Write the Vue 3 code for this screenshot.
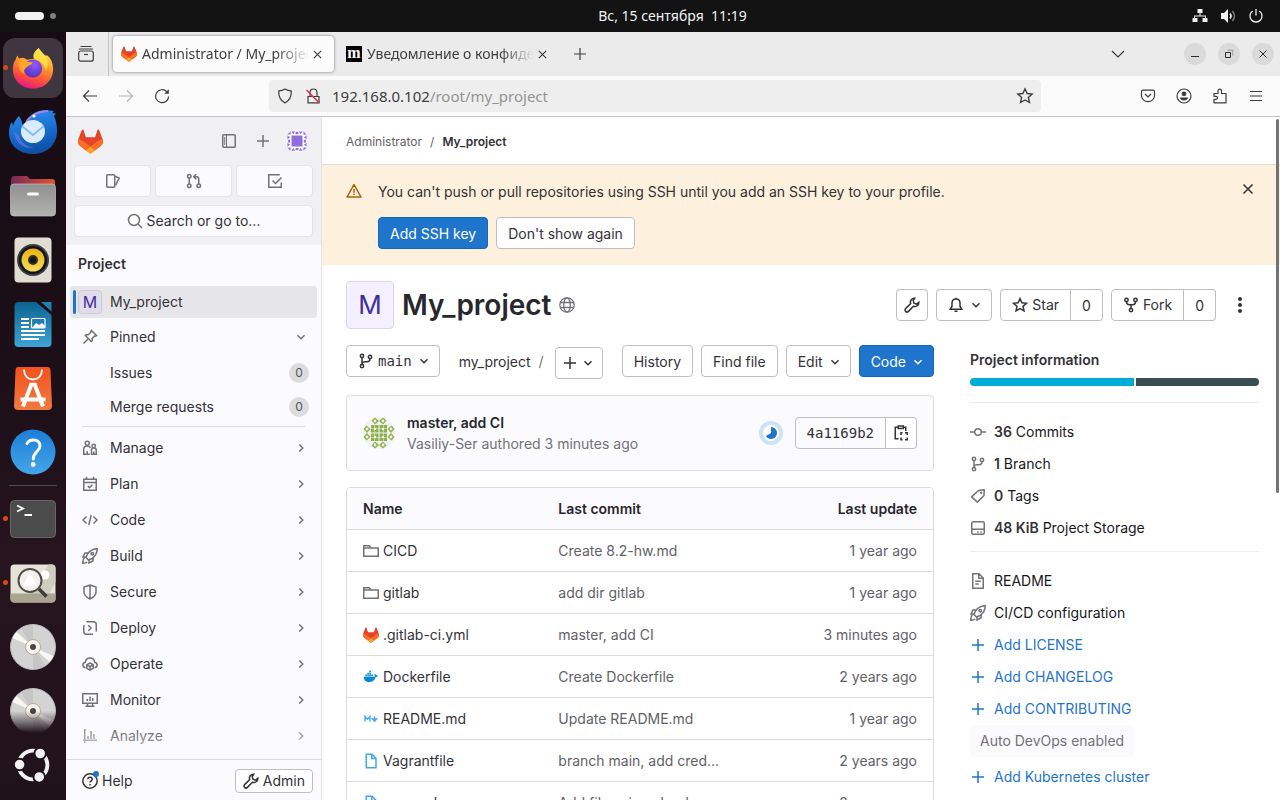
<script setup>
const navItems = [
  { label: 'Manage', icon: 'users' },
  { label: 'Plan', icon: 'calendar' },
  { label: 'Code', icon: 'code' },
  { label: 'Build', icon: 'rocket' },
  { label: 'Secure', icon: 'shield' },
  { label: 'Deploy', icon: 'deploy' },
  { label: 'Operate', icon: 'cloud' },
  { label: 'Monitor', icon: 'monitor' },
  { label: 'Analyze', icon: 'chart' },
]

const pinned = [
  { label: 'Issues', count: 0 },
  { label: 'Merge requests', count: 0 },
]

const files = [
  { name: 'CICD', icon: 'folder', tone: 'grey', commit: 'Create 8.2-hw.md', updated: '1 year ago' },
  { name: 'gitlab', icon: 'folder', tone: 'grey', commit: 'add dir gitlab', updated: '1 year ago' },
  { name: '.gitlab-ci.yml', icon: 'tanuki', tone: 'brand', commit: 'master, add CI', updated: '3 minutes ago' },
  { name: 'Dockerfile', icon: 'docker', tone: 'docker', commit: 'Create Dockerfile', updated: '2 years ago' },
  { name: 'README.md', icon: 'markdown', tone: 'sky', commit: 'Update README.md', updated: '1 year ago' },
  { name: 'Vagrantfile', icon: 'file', tone: 'sky', commit: 'branch main, add cred...', updated: '2 years ago' },
  { name: 'nexus.sh', icon: 'file', tone: 'sky', commit: 'Add files via upload', updated: '2 years ago' },
]

const stats = [
  { icon: 'commit', value: '36', label: 'Commits' },
  { icon: 'branch', value: '1', label: 'Branch' },
  { icon: 'tag', value: '0', label: 'Tags' },
  { icon: 'disk', value: '48 KiB', label: 'Project Storage' },
]

const languages = [
  { name: 'Go', share: 57, color: '#00add8' },
  { name: 'Dockerfile', share: 43, color: '#384d54' },
]

const dockApps = [
  { id: 'firefox', title: 'Firefox', active: true, running: true },
  { id: 'thunderbird', title: 'Thunderbird' },
  { id: 'files', title: 'Files' },
  { id: 'rhythmbox', title: 'Rhythmbox' },
  { id: 'writer', title: 'LibreOffice Writer' },
  { id: 'appcenter', title: 'App Center' },
  { id: 'help', title: 'Help' },
]
const dockOpen = [
  { id: 'terminal', title: 'Terminal', running: true },
  { id: 'viewer', title: 'Image Viewer', running: true },
  { id: 'disc', title: 'Disc 1' },
  { id: 'disc', title: 'Disc 2', faded: true },
]
</script>

<template>
  <svg class="defs" aria-hidden="true">
    <defs>
      <linearGradient id="gFox" x1=".7" y1="0" x2=".35" y2="1">
        <stop offset="0" stop-color="#fff44f" /><stop offset=".4" stop-color="#ff9a2a" /><stop offset=".75" stop-color="#ff4a3f" /><stop offset="1" stop-color="#e31587" />
      </linearGradient>
      <radialGradient id="gGlobe" cx=".6" cy=".3" r=".8">
        <stop offset="0" stop-color="#9059ff" /><stop offset="1" stop-color="#4c2fb5" />
      </radialGradient>
      <linearGradient id="gBird" x1=".4" y1="0" x2=".6" y2="1">
        <stop offset="0" stop-color="#2a8cf0" /><stop offset=".6" stop-color="#1565c8" /><stop offset="1" stop-color="#0f4d9c" />
      </linearGradient>
      <linearGradient id="gFolder" x1="0" y1="0" x2="1" y2="0">
        <stop offset="0" stop-color="#77295a" /><stop offset="1" stop-color="#e3532a" />
      </linearGradient>
      <linearGradient id="gFront" x1="0" y1="0" x2="0" y2="1">
        <stop offset="0" stop-color="#8f8f8f" /><stop offset="1" stop-color="#b2b4b1" />
      </linearGradient>
      <linearGradient id="gYellow" x1="0" y1="0" x2="0" y2="1">
        <stop offset="0" stop-color="#e8b110" /><stop offset="1" stop-color="#f7dc5a" />
      </linearGradient>
      <linearGradient id="gWriter" x1="0" y1="0" x2="0" y2="1">
        <stop offset="0" stop-color="#0b638f" /><stop offset="1" stop-color="#3fa4d6" />
      </linearGradient>
      <linearGradient id="gBag" x1="0" y1="0" x2="0" y2="1">
        <stop offset="0" stop-color="#f4511e" /><stop offset="1" stop-color="#f07a42" />
      </linearGradient>
      <linearGradient id="gHelp" x1="0" y1="0" x2="0" y2="1">
        <stop offset="0" stop-color="#1c7ed8" /><stop offset="1" stop-color="#44a6e8" />
      </linearGradient>

      <symbol id="i-tanuki" viewBox="0 0 25 24">
        <path fill="#e24329" d="m24.507 9.5-.034-.09L21.082.562a.896.896 0 0 0-1.694.091l-2.29 7.01H7.825L5.535.653a.898.898 0 0 0-1.694-.09L.451 9.411.416 9.5a6.297 6.297 0 0 0 2.09 7.278l.012.01.03.022 5.16 3.867 2.56 1.935 1.554 1.176a1.051 1.051 0 0 0 1.268 0l1.555-1.176 2.56-1.935 5.197-3.89.014-.01A6.297 6.297 0 0 0 24.507 9.5Z" />
        <path fill="#fc6d26" d="m24.507 9.5-.034-.09a11.44 11.44 0 0 0-4.56 2.051l-7.447 5.632 4.742 3.584 5.197-3.89.014-.01A6.297 6.297 0 0 0 24.507 9.5Z" />
        <path fill="#fca326" d="m7.707 20.677 2.56 1.935 1.555 1.176a1.051 1.051 0 0 0 1.268 0l1.555-1.176 2.56-1.935-4.743-3.584-4.755 3.584Z" />
        <path fill="#fc6d26" d="M5.01 11.461a11.43 11.43 0 0 0-4.56-2.05L.416 9.5a6.297 6.297 0 0 0 2.09 7.278l.012.01.03.022 5.16 3.867 4.745-3.584-7.444-5.632Z" />
      </symbol>
      <symbol id="i-chev-r" viewBox="0 0 16 16"><path d="m6.250 4.500 3.500 3.500-3.500 3.500" /></symbol>
      <symbol id="i-chev-d" viewBox="0 0 16 16"><path d="m4.500 6.250 3.500 3.500 3.500-3.500" /></symbol>
      <symbol id="i-plus" viewBox="0 0 16 16"><path d="M8 2v12M2 8h12" /></symbol>
      <symbol id="i-close" viewBox="0 0 16 16"><path d="m3.500 3.500 9 9m0-9-9 9" /></symbol>
      <symbol id="i-panel" viewBox="0 0 16 16"><rect x="1.750" y="1.750" width="12.500" height="12.500" rx="1" /><path d="M5.500 2v12M3.750 4v8" stroke-width="1" /></symbol>
      <symbol id="i-issues" viewBox="0 0 16 16"><rect x="1.750" y="1.750" width="8" height="12.500" rx="1" /><path d="m10 3.250 4.200 1.900-3.700 7.300" /></symbol>
      <symbol id="i-mr" viewBox="0 0 16 16"><circle cx="3.250" cy="3.250" r="1.750" /><circle cx="3.250" cy="12.750" r="1.750" /><circle cx="12.750" cy="12.750" r="1.750" /><path d="M3.250 5v6M12.750 11V6c0-1.500-.8-2.250-2-2.250H8M10.250 1.250l-2.500 2.500 2.500 2.500" /></symbol>
      <symbol id="i-todo" viewBox="0 0 16 16"><path d="M14.250 9.500v4.750H1.750V1.750h11M5.500 7.500 8.500 10.500l6-6" /></symbol>
      <symbol id="i-search" viewBox="0 0 16 16"><circle cx="7" cy="7" r="5.500" /><path d="m11 11 4 4" /></symbol>
      <symbol id="i-pin" viewBox="0 0 16 16"><path d="m9.500 1.500 5 5-1.300.6-.6-.1-2.500 2.500.2 2-1 1-6-6 1-1 2 .2L8.800 3.200l-.1-.6zM6 10l-4.500 4.500" /></symbol>
      <symbol id="i-users" viewBox="0 0 16 16"><circle cx="5.250" cy="3.250" r="2" /><circle cx="11.750" cy="6" r="1.700" /><path d="M7.750 14.250h-6V9c0-2 1.500-3 3.500-3s2.800.9 3 2M9.500 14.250V10c0-1.200.9-1.900 2.250-1.900S14.250 9 14.250 10.200v4.050zM5.250 11v3.200M11.800 11.500v2.700" /></symbol>
      <symbol id="i-calendar" viewBox="0 0 16 16"><path d="M1.750 3.250h12.500v11H1.750zM1.750 6.500h12.500M4.500.750V3.500M11.500.750V3.500M5.750 10l1.700 1.700 3-3" /></symbol>
      <symbol id="i-code" viewBox="0 0 16 16"><path d="M4.500 4.500 1 8l3.500 3.500M11.500 4.500 15 8l-3.500 3.500M9.250 3l-2.500 10" /></symbol>
      <symbol id="i-rocket" viewBox="0 0 16 16"><path d="M15.200.8C10.500.8 7.800 2.800 5.500 6L4 9.500 6.500 12l3.500-1.500c3.200-2.300 5.200-5 5.200-9.700zM6.500 4.750 3 5 1 9l3-.2M11.250 9.500 11 13l-4 2 .2-3M2.500 10c-1.500 1-1.700 3-1.700 5.200 1.700 0 3.200 0 4.500-1.200" /><circle cx="10.250" cy="5.750" r="1.250" /></symbol>
      <symbol id="i-shield" viewBox="0 0 16 16"><path d="M8 1 14 3v5c0 3.300-2.500 5.300-6 7-3.500-1.700-6-3.700-6-7V3zM8 1v14" /></symbol>
      <symbol id="i-deploy" viewBox="0 0 16 16"><path d="M4.500 1.750h7c1.700 0 2.750 1 2.750 2.750v7M1.750 5v6.500c0 1.700 1 2.750 2.750 2.750H11M6.250 5.250 9 8l-2.750 2.750" /></symbol>
      <symbol id="i-cloud" viewBox="0 0 16 16"><path d="M3.500 11.700C1.800 11.500.9 10.400.9 9c0-1.500 1-2.600 2.500-2.800C3.600 3.700 5.400 1.900 8 1.900s4.400 1.800 4.600 4.300c1.500.2 2.500 1.300 2.500 2.800 0 1.400-.9 2.500-2.600 2.700" /><path d="m8 7 3.200 1.700v3.700L8 14.200l-3.200-1.800V8.700zM4.900 8.800 8 10.500l3.100-1.700M8 10.500v3.600" /></symbol>
      <symbol id="i-monitor" viewBox="0 0 16 16"><path d="M.75 1.750h14.500v9.500H.75zM5.500 11.500v2.750M10.500 11.500v2.750M3.500 14.250h9M5.250 7v2M8 4.500V9M10.750 6v3" /></symbol>
      <symbol id="i-chart" viewBox="0 0 16 16"><path d="M2.750 1v14M1 12.250h14M6 8v3M9 3v8M12 6v5" /></symbol>
      <symbol id="i-question" viewBox="0 0 16 16"><circle cx="8" cy="8" r="7.200" /><path d="M5.800 6.300C5.900 5 6.800 4.300 8 4.300s2.200.8 2.200 1.900c0 1.500-2.200 1.700-2.200 3.200M8 11v1.500" /></symbol>
      <symbol id="i-wrench" viewBox="0 0 16 16"><path d="M10.700 1.200A4 4 0 0 0 6.700 6.600L1.600 11.600a1.950 1.950 0 0 0 2.800 2.800L9.400 9.300a4 4 0 0 0 5.400-4L12.700 7.100 9.900 6.100 9.200 3.500z" /></symbol>
      <symbol id="i-warning" viewBox="0 0 16 16"><path d="M8 1.700 15 14H1zM8 6v3.700M8 10.500V12" stroke-linejoin="round" /></symbol>
      <symbol id="i-globe" viewBox="0 0 16 16"><circle cx="8" cy="8" r="7.200" /><ellipse cx="8" cy="8" rx="3.300" ry="7.200" /><path d="M1.500 5.500h13M1.500 10.500h13" /></symbol>
      <symbol id="i-bell" viewBox="0 0 16 16"><path d="M8 1.900c-2.500 0-4 1.800-4 4.100v3.500L2.300 12.200h11.400L12 9.500V6c0-2.300-1.500-4.100-4-4.100zM6.500 14.250h3M8 .7v1.200" /></symbol>
      <symbol id="i-star" viewBox="0 0 16 16"><path d="m8 1.600 1.900 4.200 4.500.5-3.400 3 1 4.500L8 11.500l-4 2.300 1-4.500-3.400-3 4.500-.5z" /></symbol>
      <symbol id="i-fork" viewBox="0 0 16 16"><circle cx="3.500" cy="2.900" r="1.700" /><circle cx="12.500" cy="2.900" r="1.700" /><circle cx="8" cy="13.100" r="1.700" /><path d="M3.500 4.700C3.500 7 5 7.700 6.500 7.700h3c1.500 0 3-.7 3-3M8 7.700v3.500" /></symbol>
      <symbol id="i-branch" viewBox="0 0 16 16"><circle cx="4" cy="2.900" r="1.700" /><circle cx="4" cy="13.100" r="1.700" /><circle cx="12" cy="3.900" r="1.700" /><path d="M4 4.700v6.500M12 5.700c0 2.300-1.500 3-3 3H7c-1.700 0-2.700.8-3 2" /></symbol>
      <symbol id="i-dots" viewBox="0 0 16 16"><g fill="currentColor" stroke="none"><circle cx="8" cy="2" r="2" /><circle cx="8" cy="8" r="2" /><circle cx="8" cy="14" r="2" /></g></symbol>
      <symbol id="i-copy" viewBox="0 0 16 16"><path d="M5 2.250H2.250v11.500H5.500M10.500 2.250h2.250V6M5.250 1h5v2.500h-5zM8 10V7.750h1.500M12 7.750h2.250V10M14.250 12.500v2.250H12M9.500 14.750H8V12.500" /></symbol>
      <symbol id="i-folder" viewBox="0 0 16 16"><path d="M.75 13.250V2.750h5.500L8 5h7.250v8.250zM.75 5H8" /></symbol>
      <symbol id="i-file" viewBox="0 0 16 16"><path d="M3.250 1.250H9L13 5.200v9.550H3.250zM8.750 1.500v4H13" /></symbol>
      <symbol id="i-doc" viewBox="0 0 16 16"><path d="M2.750.750H9L13.250 5v10.250H2.750zM8.750 1v4.250H13M5.250 8.250h5.500M5.250 11h3.500" /></symbol>
      <symbol id="i-commit" viewBox="0 0 16 16"><circle cx="8" cy="8" r="3.250" /><path d="M0 8h4.750M11.250 8H16" /></symbol>
      <symbol id="i-tag" viewBox="0 0 16 16"><path d="M8.500 2.500 14.200 1.800 14 7.500l-6.600 6.600-5.800-5.200z" stroke-linejoin="round" /><circle cx="11.200" cy="4.800" r=".5" /></symbol>
      <symbol id="i-disk" viewBox="0 0 16 16"><rect x="1.750" y="1.750" width="12.500" height="12.500" rx="1.500" /><path d="M2 9.250h12M7 12h1.500M10.250 12h1.500" /></symbol>
      <symbol id="i-markdown" viewBox="0 0 16 16"><path d="M2 10.500v-5l2.500 2.800L7 5.500v5M11.500 5.500v3M9.500 8l2 2.200 2-2.200z" stroke-width="1.400" /></symbol>
      <symbol id="i-docker" viewBox="0 0 16 16"><path fill="currentColor" stroke="none" d="M1 7.700h10.700c.2-1 .1-1.700-.4-2.400l.6-.6c.7.5 1 1 1.100 1.700.7-.1 1.400 0 1.900.4-.4.9-1.200 1.300-2.300 1.300C11.600 11.700 9.300 13 6.300 13 2.500 13 .8 11.200 1 7.700zM2.300 5.600h1.600v1.600H2.300zM4.300 5.600h1.600v1.600H4.300zM6.300 5.600h1.600v1.600H6.300zM8.300 5.600h1.600v1.600H8.300zM4.300 3.700h1.600v1.500H4.300zM6.300 3.700h1.600v1.500H6.300zM6.300 1.800h1.600v1.500H6.300z" /></symbol>

      <symbol id="d-firefox" viewBox="0 0 48 48">
        <path fill="url(#gFox)" d="M30 3c1 3 4.500 5 6.500 8 1-.2 2-.1 3 .3C43 15 45 19 45 25c0 12-9.500 20.500-21 20.500S3 37 3 25c0-4 1-7.500 3-10 .3-1.500 1-3 2-4 .2 1.200.7 2 1.500 3 3-1.300 5.500-1 8.500 1.500l7.500-1.500C23 11 26 6 30 3z" />
        <circle cx="24" cy="24.500" r="9.500" fill="url(#gGlobe)" />
        <path fill="#ffa52b" d="M9 15c4-1.500 7 0 9 2.500l6 .5c-1 2.500-4 3-5.500 4.500-2.500 1.500-5 4.500-3.500 7.500-4-2-6-5-6-9z" />
        <path fill="#ffe14a" d="M30 3c1 3 4.500 5 6.500 8 3 4.500 4 10 1 16-1-4-3-8-7-10.500-3-1.500-5-2-5-2.500C23 11 26 6 30 3z" opacity=".85" />
      </symbol>
      <symbol id="d-thunderbird" viewBox="0 0 48 48">
        <path fill="url(#gBird)" d="M21 9c4-6 12-8 24-6l-2 2 4 .5-2 2.500c2 4 3 10 3 15 0 13-9.500 23-24 23C10 46 0 37 0 25c0-5 1-9 3-11l1 4c1-4 3-7 6-10 2 3 4 7 4 12z" />
        <path fill="none" stroke="#9d86ea" stroke-width="2" d="M17 15c3-7 10-11 22-12" />
        <circle cx="25" cy="8" r="1.600" fill="#fff" />
        <ellipse cx="24" cy="23.500" rx="12" ry="11.500" fill="#d9ecff" />
        <path d="m13 18 11 9 11-9" fill="none" stroke="#86bdf0" stroke-width="2" />
        <path d="M5 24c1 10 9 17 20 16-10-2-14-7-15-13z" fill="#6f7fe0" opacity=".6" />
      </symbol>
      <symbol id="d-files" viewBox="0 0 48 48">
        <path fill="url(#gFolder)" d="M2 14V8c0-2 1-4 4-4h12l3 3h22c2 0 3 1 3 3v6H2z" />
        <rect x="1.500" y="12" width="45" height="32" rx="3.500" fill="url(#gFront)" stroke="#c4c4c0" stroke-width=".7" />
        <rect x="18" y="20.500" width="12" height="3" rx="1.500" fill="#fff" />
      </symbol>
      <symbol id="d-rhythmbox" viewBox="0 0 48 48">
        <rect x="5.500" y="1.500" width="37" height="45" rx="4" fill="#e2ddd2" />
        <circle cx="24" cy="24" r="16" fill="#3c3d44" /><circle cx="24" cy="24" r="14" fill="#15161b" />
        <circle cx="24" cy="24" r="11.500" fill="url(#gYellow)" /><circle cx="24" cy="24" r="5" fill="#33302c" /><circle cx="24" cy="24" r="3" fill="#151515" />
      </symbol>
      <symbol id="d-writer" viewBox="0 0 48 48">
        <path fill="url(#gWriter)" d="M9 2h18l15.500 13v28a4 4 0 0 1-4 4H9.500a4 4 0 0 1-4-4V6c0-2 1.500-4 3.500-4z" />
        <path fill="#1f80b0" d="M32 2h10.500v9.500z" />
        <path d="M12 19h8M12 23h8M12 27h8M12 31h24M12 35h24M12 39h18" stroke="#fff" stroke-width="2" />
        <rect x="22.500" y="18.500" width="13.500" height="9.500" rx="1" fill="none" stroke="#fff" stroke-width="1.200" />
        <path fill="#fff" d="m23 28 4-5 3 2 3-2 3 3v2z" />
      </symbol>
      <symbol id="d-appcenter" viewBox="0 0 48 48">
        <path fill="url(#gBag)" d="M9.500 3h29c2 0 3 1 3 3L43 42c0 2.500-1.500 4-4 4H9c-2.500 0-4-1.500-4-4L6.500 6c0-2 1-3 3-3z" />
        <path d="M15 5.500c0 6 3.500 10 9 10s9-4 9-10" fill="none" stroke="#fff" stroke-width="1.800" />
        <path d="M22.500 20 14 42.500M25.500 20 34 42.500M11.500 35.500h25" stroke="#fff" stroke-width="4" fill="none" />
        <path d="M20.500 20h7" stroke="#fff" stroke-width="2.500" />
      </symbol>
      <symbol id="d-help" viewBox="0 0 48 48">
        <circle cx="24" cy="24" r="22.500" fill="url(#gHelp)" />
        <path d="M18 15.500C19.500 12.500 22 12 24.500 12c4 0 6.500 2.500 6.500 6 0 5-6.700 6-6.700 13" fill="none" stroke="#fff" stroke-width="3" stroke-linecap="round" />
        <circle cx="24.200" cy="36.500" r="2.400" fill="#fff" />
      </symbol>
      <symbol id="d-terminal" viewBox="0 0 48 48">
        <rect x="1.500" y="5.500" width="45" height="37" rx="4" fill="#4b4b4b" stroke="#666" stroke-width="1" />
        <path d="m8 10.500 6 3-6 3M15.500 20h7.500" fill="none" stroke="#fff" stroke-width="1.800" />
      </symbol>
      <symbol id="d-viewer" viewBox="0 0 48 48">
        <rect x="1.500" y="5.500" width="45" height="38" rx="4" fill="#e6e4d8" />
        <path fill="#cfcdbd" d="M40 5.500 20 35h20l6.500-12V9c0-2-1.500-3.500-3.500-3.500z" />
        <path fill="#aaa491" d="M1.500 34.500h45V40c0 2-1.500 3.500-3.500 3.500H5c-2 0-3.500-1.500-3.500-3.500z" />
        <circle cx="36" cy="16" r="4.500" fill="#fff" />
        <circle cx="21" cy="21.500" r="11.500" fill="#f1f0ea" stroke="#4d4d4d" stroke-width="2" />
        <path fill="#fff" d="m14 27 7-14 7 14z" />
        <path d="m30 30 7.500 7.500" stroke="#3b3b3b" stroke-width="3.500" />
      </symbol>
      <symbol id="d-disc" viewBox="0 0 48 48">
        <circle cx="24" cy="24" r="22.500" fill="#d3d3d3" stroke="#bdbdbd" />
        <path d="M24 24V2a22 22 0 0 0-12 4zM24 24v22a22 22 0 0 0 12-4z" fill="#c6c6c6" />
        <path d="M24 24 3.500 15a22 22 0 0 1 4-6zM24 24l20.500 9a22 22 0 0 1-4 6z" fill="#f8f7f3" />
        <circle cx="24" cy="24" r="7.500" fill="#f5f3ee" stroke="#b5ac93" /><circle cx="24" cy="24" r="3" fill="#484848" />
      </symbol>
      <symbol id="d-ubuntu" viewBox="0 0 48 48">
        <circle cx="24" cy="24" r="15" fill="none" stroke="#f2f2f2" stroke-width="4" />
        <g fill="#f2f2f2" stroke="#20121b" stroke-width="2"><circle cx="10" cy="23.500" r="6" /><circle cx="31.500" cy="12" r="6" /><circle cx="30.500" cy="36.500" r="6" /></g>
      </symbol>
    </defs>
  </svg>

  <div class="desktop">
    <header class="topbar">
      <button class="activities" aria-label="Activities"><span class="pill"></span><span class="dot"></span></button>
      <button class="clock">Вс, 15 сентября&nbsp; 11:19</button>
      <button class="tray" aria-label="System menu">
        <svg width="16" height="16" viewBox="0 0 16 16"><path fill="#f2f2f2" d="M5.500 1h5v4h-2v2.500H14V10h1.500v4h-5v-4H13V8.500H3V10h2.500v4h-5v-4H2V7.500h5.500V5h-2z" /></svg>
        <svg width="16" height="16" viewBox="0 0 16 16"><path fill="#f2f2f2" d="M1 5h3l4-4v14l-4-4H1z" /><path d="M10 5.500c1.300 1.500 1.300 3.500 0 5" fill="none" stroke="#f2f2f2" stroke-width="1.500" /><path d="M12.500 3c2.300 3 2.300 7 0 10" fill="none" stroke="#777" stroke-width="1.500" /></svg>
        <svg width="16" height="16" viewBox="0 0 16 16"><path d="M8 1v6.500M4.700 3a6 6 0 1 0 6.600 0" fill="none" stroke="#f2f2f2" stroke-width="1.300" /></svg>
      </button>
    </header>

    <div class="workspace">
      <nav class="dock" aria-label="Dock">
        <div class="apps">
          <button v-for="a in dockApps" :key="a.title" class="app" :class="{ active: a.active, running: a.running }" :aria-label="a.title">
            <svg><use :href="'#d-' + a.id" /></svg>
          </button>
          <div class="dock-sep"></div>
          <button v-for="a in dockOpen" :key="a.title" class="app" :class="{ running: a.running, faded: a.faded }" :aria-label="a.title">
            <svg><use :href="'#d-' + a.id" /></svg>
          </button>
        </div>
        <button class="show-apps" aria-label="Show apps"><svg><use href="#d-ubuntu" /></svg></button>
      </nav>

      <section class="browser">
        <div class="tabs">
          <button class="recent" aria-label="Recent browsing">
            <svg width="18" height="18" viewBox="0 0 18 18" class="line"><path d="M3.500 1.500h11M2 4h14" /><rect x="1.700" y="6" width="14.600" height="10.200" rx="2" /><path d="M7 9.500h4" /></svg>
          </button>
          <div class="tab current">
            <svg class="fav"><use href="#i-tanuki" /></svg>
            <a href="#" class="tab-title">Administrator / My_project</a>
            <button class="tab-close" aria-label="Close tab"><svg><use href="#i-close" /></svg></button>
          </div>
          <div class="tab">
            <span class="fav m">m</span>
            <a href="#" class="tab-title">Уведомление о конфиденциальности</a>
            <button class="tab-close" aria-label="Close tab"><svg><use href="#i-close" /></svg></button>
          </div>
          <button class="new-tab" aria-label="New tab"><svg class="line" width="16" height="16"><use href="#i-plus" /></svg></button>
          <button class="list-tabs" aria-label="List tabs"><svg class="line" width="16" height="16" viewBox="0 0 16 16"><path d="m2 5 6 6 6-6" /></svg></button>
          <div class="win">
            <button aria-label="Minimize"><svg width="10" height="10" viewBox="0 0 10 10"><path d="M1 7.500h8" /></svg></button>
            <button aria-label="Restore"><svg width="10" height="10" viewBox="0 0 10 10"><path d="M1.500 3.500h5v5h-5z" /><path d="M3.500 1.200h5.300v5.300" stroke="#999" /></svg></button>
            <button aria-label="Close window"><svg width="10" height="10" viewBox="0 0 10 10"><path d="m1.500 1.500 7 7m0-7-7 7" /></svg></button>
          </div>
        </div>

        <div class="toolbar">
          <div class="history">
            <button aria-label="Back"><svg class="line" width="16" height="16" viewBox="0 0 16 16"><path d="M15 8H1.500M7 2.500 1.500 8 7 13.500" /></svg></button>
            <button aria-label="Forward" disabled><svg class="line" width="16" height="16" viewBox="0 0 16 16"><path d="M1 8h13.500M9 2.500 14.500 8 9 13.500" /></svg></button>
            <button aria-label="Reload"><svg class="line" width="16" height="16" viewBox="0 0 16 16"><path d="M14.600 8.500a6.500 6.500 0 1 1-2-5" /><path d="M14.800 1.200v4.600h-4.600z" fill="currentColor" stroke="none" /></svg></button>
          </div>
          <div class="urlbar">
            <svg class="line" width="16" height="16" viewBox="0 0 16 16"><path d="M8 1c2 1.300 4.300 1.800 6.300 1.800.2 6-2 10-6.300 12.200C3.700 12.800 1.500 8.800 1.700 2.800 3.700 2.800 6 2.300 8 1z" stroke-linejoin="round" /></svg>
            <svg class="line" width="16" height="16" viewBox="0 0 16 16"><path d="M3 8.500h11v6.300H3zM5 8.500V4.700C5 2.500 6.200 1 8.500 1S12 2.500 12 4.700v3.800" /><path d="M1.500 2 14.500 15" stroke="#e22850" stroke-width="1.500" /></svg>
            <div class="address"><label for="url">192.168.0.102</label><input id="url" value="/root/my_project" /></div>
            <button aria-label="Bookmark"><svg class="line" width="18" height="18"><use href="#i-star" /></svg></button>
          </div>
          <div class="tools">
            <button aria-label="Pocket"><svg class="line" width="16" height="16" viewBox="0 0 16 16"><path d="M1.500 3.500c0-.8.500-1.300 1.300-1.300h10.400c.8 0 1.300.5 1.300 1.300V7.500a6.500 6.200 0 0 1-13 0zM5 6l3 3 3-3" /></svg></button>
            <button aria-label="Account"><svg class="line" width="16" height="16" viewBox="0 0 16 16"><circle cx="8" cy="8" r="7" /><circle cx="8" cy="5.800" r="2.400" fill="currentColor" stroke="none" /><path d="M3.800 9.500h8.400c-.4 2-2 3-4.200 3s-3.800-1-4.200-3z" fill="currentColor" stroke="none" /></svg></button>
            <button aria-label="Extensions"><svg class="line" width="16" height="16" viewBox="0 0 16 16"><path d="M2 5.500h4V3c0-2.500 3.500-2.500 3.500 0v2.500H14v9.300H2v-3.500h2c2 0 2-3 0-3H2z" stroke-linejoin="round" /></svg></button>
            <button aria-label="Menu"><svg class="line" width="16" height="16" viewBox="0 0 16 16"><path d="M2 3.500h12M2 8h12M2 12.500h12" /></svg></button>
          </div>
        </div>

        <div class="page">
          <aside class="sidebar">
            <div class="super">
              <div class="super-top">
                <a href="#" aria-label="Home"><svg class="logo"><use href="#i-tanuki" /></svg></a>
                <button aria-label="Collapse sidebar"><svg class="icon"><use href="#i-panel" /></svg></button>
                <button aria-label="Create new"><svg class="icon"><use href="#i-plus" /></svg></button>
                <button aria-label="User menu">
                  <svg class="identicon" viewBox="0 0 24 24"><circle cx="12" cy="12" r="12" fill="#fff" /><g fill="#8f6fe0"><rect x="6" y="6" width="12" height="12" /><path d="M6 1.500h4L8 4.500zM14 1.500h4l-2 3zM10.500 2h3v2.500h-3zM6 22.500h4l-2-3zM14 22.500h4l-2-3zM10.500 19.500h3V22h-3zM1.500 6v4l3-2zM1.500 18v-4l3 2zM22.500 6v4l-3-2zM22.500 18v-4l-3 2zM2 10.500h2.500v3H2zM19.500 10.500H22v3h-2.500zM1.500 5 5 1.500V5zM22.500 5 19 1.500V5zM1.500 19 5 22.500V19zM22.500 19 19 22.500V19z" /></g></svg>
                </button>
              </div>
              <div class="quick">
                <button aria-label="Issues"><svg class="icon"><use href="#i-issues" /></svg></button>
                <button aria-label="Merge requests"><svg class="icon"><use href="#i-mr" /></svg></button>
                <button aria-label="To-Do list"><svg class="icon"><use href="#i-todo" /></svg></button>
              </div>
              <button class="search"><svg class="icon"><use href="#i-search" /></svg>Search or go to…</button>
            </div>
            <div class="nav-scroll">
              <h2 class="nav-title">Project</h2>
              <a href="#" class="item here"><span class="mini-avatar">M</span>My_project</a>
              <a href="#" class="item pin"><svg class="icon"><use href="#i-pin" /></svg>Pinned<svg class="icon chev"><use href="#i-chev-d" /></svg></a>
              <div class="pinned">
                <a v-for="p in pinned" :key="p.label" href="#" class="item sub">{{ p.label }}<span class="badge">{{ p.count }}</span></a>
              </div>
              <div class="sections">
                <a v-for="n in navItems" :key="n.label" href="#" class="item"><svg class="icon"><use :href="'#i-' + n.icon" /></svg>{{ n.label }}<svg class="icon chev"><use href="#i-chev-r" /></svg></a>
              </div>
            </div>
            <div class="side-foot">
              <button class="help"><span class="help-icon"><svg class="icon"><use href="#i-question" /></svg></span>Help</button>
              <a href="#" class="admin"><svg class="icon"><use href="#i-wrench" /></svg>Admin</a>
            </div>
          </aside>

          <main class="main">
            <nav class="crumbs" aria-label="Breadcrumb"><a href="#">Administrator</a><span>/</span><a href="#" class="last">My_project</a></nav>
            <div class="alert">
              <svg class="icon warn"><use href="#i-warning" /></svg>
              <div class="alert-body">
                <p>You can't push or pull repositories using SSH until you add an SSH key to your profile.</p>
                <div class="row"><button class="btn low primary">Add SSH key</button><button class="btn low">Don't show again</button></div>
              </div>
              <button class="dismiss" aria-label="Dismiss"><svg class="icon"><use href="#i-close" /></svg></button>
            </div>

            <div class="title-row">
              <span class="avatar">M</span>
              <h1>My_project</h1>
              <svg class="icon globe"><use href="#i-globe" /></svg>
              <div class="row actions">
                <button class="btn square" aria-label="Admin area"><svg class="icon"><use href="#i-wrench" /></svg></button>
                <button class="btn bell" aria-label="Notifications"><svg class="icon"><use href="#i-bell" /></svg><svg class="icon"><use href="#i-chev-d" /></svg></button>
                <div class="group"><button class="btn"><svg class="icon"><use href="#i-star" /></svg>Star</button><a href="#" class="btn low">0</a></div>
                <div class="group"><button class="btn"><svg class="icon"><use href="#i-fork" /></svg>Fork</button><a href="#" class="btn low">0</a></div>
                <button class="more" aria-label="More actions"><svg class="icon"><use href="#i-dots" /></svg></button>
              </div>
            </div>

            <div class="columns">
              <div class="repo">
                <div class="tree-bar">
                  <button class="btn mono ref"><svg class="icon"><use href="#i-branch" /></svg>main<svg class="icon"><use href="#i-chev-d" /></svg></button>
                  <div class="path"><a href="#">my_project</a><span>/</span></div>
                  <button class="btn add" aria-label="Add to tree"><svg class="icon"><use href="#i-plus" /></svg><svg class="icon"><use href="#i-chev-d" /></svg></button>
                  <div class="row tree-actions">
                    <a href="#" class="btn low">History</a>
                    <button class="btn low">Find file</button>
                    <button class="btn low drop">Edit<svg class="icon"><use href="#i-chev-d" /></svg></button>
                    <button class="btn low primary drop">Code<svg class="icon"><use href="#i-chev-d" /></svg></button>
                  </div>
                </div>

                <div class="commit">
                  <svg class="author" viewBox="0 0 32 32"><circle cx="16" cy="16" r="16" fill="#f2f2f2" /><g fill="#8fb04a"><path d="M8 8h3.500v3.500H8zM12 8h3.500v3.500H12zM16.500 8H20v3.500h-3.500zM20.500 8H24v3.500h-3.500zM8 12h3.500v3.500H8zM20.500 12H24v3.500h-3.500zM8 16.500h3.500V20H8zM20.500 16.500H24V20h-3.500zM12 12h3.500v3.500H12zM16.500 12H20v3.500h-3.500zM12 16.500h3.500V20H12zM16.500 16.500H20V20h-3.500zM8 20.500h3.500V24H8zM12 20.500h3.500V24H12zM16.500 20.500H20V24h-3.500zM20.500 20.500H24V24h-3.500z" /><path d="m16 4 4-3.500 3.500 3L20 7.500zM16 4l-4-3.500-3.500 3L12 7.500zM16 28l4 3.500 3.500-3-3.500-4zM16 28l-4 3.500-3.500-3 3.500-4zM4 16 .5 12l3-3.500L7.500 12zM4 16 .5 20l3 3.500L7.500 20zM28 16l3.500-4-3-3.500-4 3.500zM28 16l3.500 4-3 3.500-4-3.500z" /></g><g fill="#f2f2f2"><circle cx="12" cy="12" r="1.200" /><circle cx="20" cy="12" r="1.200" /><circle cx="12" cy="20" r="1.200" /><circle cx="20" cy="20" r="1.200" /><circle cx="12" cy="4" r="1.400" /><circle cx="20" cy="4" r="1.400" /><circle cx="12" cy="28" r="1.400" /><circle cx="20" cy="28" r="1.400" /><circle cx="4" cy="12" r="1.400" /><circle cx="4" cy="20" r="1.400" /><circle cx="28" cy="12" r="1.400" /><circle cx="28" cy="20" r="1.400" /></g></svg>
                  <div class="commit-text"><a href="#" class="msg">master, add CI</a><span>Vasiliy-Ser authored 3 minutes ago</span></div>
                  <a href="#" class="status" aria-label="Pipeline: running"><svg width="24" height="24" viewBox="0 0 24 24"><circle cx="12" cy="12" r="12" fill="#cbe2f9" /><circle cx="12" cy="12" r="8" fill="#fff" /><path d="M12 6v6l-5.200 3A6 6 0 1 0 12 6z" fill="#1f75cb" /></svg></a>
                  <div class="group"><a href="#" class="btn mono">4a1169b2</a><button class="btn clip" aria-label="Copy commit SHA"><svg class="icon"><use href="#i-copy" /></svg></button></div>
                </div>

                <div class="table-box">
                  <table>
                    <thead><tr><th>Name</th><th>Last commit</th><th>Last update</th></tr></thead>
                    <tbody>
                      <tr v-for="f in files" :key="f.name">
                        <td><a href="#" class="file"><svg class="icon" :class="f.tone"><use :href="'#i-' + f.icon" /></svg>{{ f.name }}</a></td>
                        <td><a href="#">{{ f.commit }}</a></td>
                        <td>{{ f.updated }}</td>
                      </tr>
                    </tbody>
                  </table>
                </div>
              </div>

              <aside class="info">
                <h2>Project information</h2>
                <div class="langs"><span v-for="l in languages" :key="l.name" :style="{ flexGrow: l.share, background: l.color }"></span></div>
                <hr />
                <ul>
                  <li v-for="s in stats" :key="s.label"><a href="#"><svg class="icon"><use :href="'#i-' + s.icon" /></svg><span><b>{{ s.value }}</b> {{ s.label }}</span></a></li>
                </ul>
                <hr />
                <ul>
                  <li><a href="#"><svg class="icon"><use href="#i-doc" /></svg>README</a></li>
                  <li><a href="#"><svg class="icon"><use href="#i-rocket" /></svg>CI/CD configuration</a></li>
                  <li v-for="t in ['LICENSE', 'CHANGELOG', 'CONTRIBUTING']" :key="t"><a href="#" class="blue"><svg class="icon"><use href="#i-plus" /></svg>Add {{ t }}</a></li>
                  <li><a href="#" class="chip">Auto DevOps enabled</a></li>
                  <li class="spaced"><a href="#" class="blue"><svg class="icon"><use href="#i-plus" /></svg>Add Kubernetes cluster</a></li>
                </ul>
              </aside>
            </div>
            <div class="thumb"></div>
          </main>
        </div>
      </section>
    </div>
  </div>
</template>

<style>
body {
  overflow: hidden;
}
</style>

<style scoped>
* {
  box-sizing: border-box;
}
button {
  font: inherit;
  color: inherit;
  background: none;
  border: 0;
  padding: 0;
  display: flex;
  align-items: center;
  justify-content: center;
}
a {
  color: inherit;
  text-decoration: none;
}
h1, h2, p, ul {
  margin: 0;
  padding: 0;
}
.defs {
  position: absolute;
  width: 0;
  height: 0;
}
.desktop {
  height: 100vh;
  display: flex;
  flex-direction: column;
  overflow: hidden;
  font-family: Inter, "Noto Sans", sans-serif;
  font-size: 14px;
  line-height: 20px;
  color: #333238;
}
.line {
  fill: none;
  stroke: currentColor;
  stroke-width: 1.2;
}
.icon {
  width: 16px;
  height: 16px;
  flex: none;
  fill: none;
  stroke: currentColor;
  stroke-width: 1.5;
}

/* system bar */
.topbar {
  height: 32px;
  flex: none;
  background: #131313;
  color: #f2f2f2;
  display: grid;
  grid-template-columns: 1fr auto 1fr;
  align-items: center;
  padding: 0 16px 0 15px;
  font-family: "Noto Sans", "Open Sans", sans-serif;
}
.activities {
  gap: 6px;
  justify-self: start;
}
.pill {
  width: 29px;
  height: 8px;
  border-radius: 4px;
  background: #f2f2f2;
}
.dot {
  width: 6px;
  height: 6px;
  border-radius: 50%;
  background: #808080;
}
.clock {
  margin-left: 66px;
}
.tray {
  gap: 12px;
  justify-self: end;
}

.workspace {
  flex: 1;
  min-height: 0;
  display: flex;
}

/* dock */
.dock {
  width: 66px;
  flex: none;
  display: flex;
  flex-direction: column;
  align-items: center;
  background: linear-gradient(#170c13, #1c0f18 45%, #27141f 70%, #20121b);
}
.apps {
  flex: 1;
  min-height: 0;
  overflow: hidden;
  padding-top: 2px;
}
.app {
  position: relative;
  width: 60px;
  height: 60px;
  margin-top: 4px;
  border-radius: 12px;
}
.app svg {
  width: 48px;
  height: 48px;
}
.app.active {
  background: #403640;
}
.app.active svg {
  width: 46px;
  height: 46px;
}
.app.running::before {
  content: "";
  position: absolute;
  left: 0;
  top: 27px;
  width: 5px;
  height: 5px;
  border-radius: 50%;
  background: #dd4814;
}
.app.faded svg {
  mask-image: linear-gradient(#000 50%, transparent 96%);
}
.dock-sep {
  height: 1px;
  margin: 3px 6px -1px;
  background: #544b52;
}
.show-apps {
  height: 50px;
  margin-bottom: 10px;
}
.show-apps svg {
  width: 46px;
  height: 46px;
}

/* browser chrome */
.browser {
  flex: 1;
  min-width: 0;
  display: flex;
  flex-direction: column;
  background: #fff;
}
.tabs {
  height: 44px;
  flex: none;
  display: flex;
  align-items: center;
  background: #ebebeb;
  color: #3d3d3d;
  font-family: "Noto Sans", "Open Sans", sans-serif;
}
.recent {
  width: 43px;
  height: 44px;
  padding-right: 2px;
  border-right: 1px solid #c3c3c3;
  margin-right: 4px;
}
.tab {
  width: 221px;
  height: 36px;
  margin-right: 4px;
  padding: 0 9px 0 8px;
  display: flex;
  align-items: center;
  border-radius: 4px;
}
.tab.current {
  background: #fbfbfb;
  box-shadow: 0 0 3px rgba(0, 0, 0, 0.5);
}
.fav {
  width: 16px;
  height: 16px;
  flex: none;
  margin-right: 5px;
}
.fav.m {
  background: #000;
  color: #fff;
  font: bold 16px/14px "Liberation Serif", serif;
  text-align: center;
}
.tab-title {
  flex: 1;
  overflow: hidden;
  white-space: nowrap;
  mask-image: linear-gradient(90deg, #000 80%, transparent);
}
.tab-close {
  width: 16px;
  height: 16px;
  flex: none;
}
.tab-close svg {
  width: 13px;
  height: 13px;
  stroke: #3d3d3d;
  stroke-width: 1.4;
}
.new-tab {
  width: 34px;
  height: 32px;
}
.list-tabs {
  width: 32px;
  height: 32px;
  margin-left: auto;
}
.win {
  display: flex;
  gap: 12px;
  margin: 0 6px 0 50px;
}
.win button {
  width: 22px;
  height: 22px;
  border-radius: 50%;
  background: #dadada;
}
.win svg {
  fill: none;
  stroke: #2e2e2e;
  stroke-width: 1;
}
.toolbar {
  height: 41px;
  flex: none;
  display: flex;
  align-items: center;
  background: #fbfbfb;
  border-bottom: 1px solid #c6c6c6;
  color: #3d3d3d;
}
.history,
.tools {
  display: flex;
  flex: none;
}
.history {
  padding-left: 6px;
}
.tools {
  padding-right: 6px;
}
.history button,
.tools button {
  width: 36px;
  height: 32px;
}
.history button:disabled {
  color: #b4b4b4;
}
.urlbar {
  flex: 1;
  height: 32px;
  margin: 0 89px;
  padding: 0 7px 0 8px;
  display: flex;
  align-items: center;
  gap: 12px;
  border-radius: 4px;
  background: #eeeeee;
}
.address {
  flex: 1;
  display: flex;
  align-items: center;
  margin-left: -1px;
  font: 15px/20px "Noto Sans", "Open Sans", sans-serif;
}
.address label {
  color: #3d3d3d;
}
.address input {
  flex: 1;
  min-width: 0;
  border: 0;
  padding: 0;
  background: none;
  font: inherit;
  color: #949494;
  outline: 0;
}

.page {
  flex: 1;
  min-height: 0;
  display: flex;
}

/* sidebar */
.sidebar {
  width: 256px;
  flex: none;
  display: flex;
  flex-direction: column;
  background: #fbfafd;
  border-right: 1px solid #e3e3e7;
}
.super {
  background: #f0eff2;
  padding: 8px;
  display: flex;
  flex-direction: column;
  gap: 8px;
}
.super-top {
  height: 32px;
  display: flex;
  align-items: center;
  margin-right: -1px;
  color: #737278;
}
.super-top a {
  margin: 0 auto 0 4px;
  height: 25px;
}
.logo {
  width: 25px;
  height: 25px;
}
.super-top button {
  width: 34px;
  height: 32px;
}
.identicon {
  width: 22px;
  height: 22px;
}
.quick {
  display: grid;
  grid-template-columns: repeat(3, 1fr);
  gap: 4px;
}
.quick button,
.search {
  height: 32px;
  border: 1px solid #e4e3e8;
  border-radius: 4px;
  background: #fbfafd;
}
.quick button {
  color: #737278;
}
.search {
  gap: 4px;
}
.search .icon {
  color: #737278;
}
.nav-scroll {
  position: relative;
  flex: 1;
  min-height: 0;
  overflow: hidden;
  padding: 0 4px;
}
.nav-scroll::after {
  content: "";
  position: absolute;
  left: 0;
  right: 0;
  bottom: 0;
  height: 40px;
  background: linear-gradient(rgba(251, 250, 253, 0), rgba(251, 250, 253, 0.85));
}
.nav-title {
  font-size: 14px;
  line-height: 20px;
  font-weight: 600;
  padding: 9px 8px 12px;
}
.item {
  height: 32px;
  padding: 0 8px;
  display: flex;
  align-items: center;
  gap: 12px;
  border-radius: 4px;
}
.item > .icon {
  margin-left: 4px;
  color: #737278;
}
.item > .chev {
  margin-left: auto;
}
.here {
  position: relative;
  background: #e6e6e8;
  gap: 8px;
}
.here::before {
  content: "";
  position: absolute;
  left: 3px;
  top: 4px;
  width: 3px;
  height: 24px;
  border-radius: 2px;
  background: #1f75cb;
}
.mini-avatar {
  width: 24px;
  height: 24px;
  border: 1px solid #cfc9dd;
  border-radius: 4px;
  background: #e1dbec;
  color: #41319c;
  font-size: 16px;
  line-height: 22px;
  text-align: center;
}
.pin {
  margin: 3px 0 4px;
}
.pinned {
  display: grid;
  gap: 2px;
}
.sub {
  padding-left: 40px;
}
.badge {
  margin-left: auto;
  width: 20px;
  height: 20px;
  border-radius: 10px;
  background: #dcdcde;
  color: #535158;
  font-size: 12px;
  line-height: 20px;
  text-align: center;
}
.sections {
  display: grid;
  gap: 4px;
  margin-top: 3px;
  padding-top: 6px;
  background: linear-gradient(#dcdcde, #dcdcde) 12px 0 / calc(100% - 24px) 1px no-repeat;
}
.side-foot {
  height: 41px;
  flex: none;
  border-top: 1px solid #dcdcde;
  padding: 1px 8px 0;
  display: flex;
  align-items: center;
  justify-content: space-between;
}
.help {
  gap: 4px;
  padding-left: 8px;
}
.help-icon {
  position: relative;
  height: 16px;
}
.help-icon::after {
  content: "";
  position: absolute;
  right: -1px;
  top: -2px;
  width: 6px;
  height: 6px;
  border-radius: 50%;
  background: #1f75cb;
}
.admin {
  display: flex;
  align-items: center;
  gap: 4px;
  height: 24px;
  padding: 0 7px;
  border: 1px solid #bfbfc3;
  border-radius: 4px;
  background: #fff;
}

/* main */
.main {
  position: relative;
  flex: 1;
  min-width: 0;
  overflow: hidden;
}
.thumb {
  position: absolute;
  top: 2px;
  right: 1px;
  width: 3px;
  height: 374px;
  border-radius: 2px;
  background: #737373;
}
.crumbs {
  height: 48px;
  display: flex;
  align-items: center;
  gap: 8px;
  padding: 2px 24px 0;
  border-bottom: 1px solid #dcdcde;
  font-size: 12px;
  color: #626168;
}
.crumbs .last {
  font-weight: 600;
  color: #333238;
}
.alert {
  display: flex;
  padding: 16px 24px;
  background: #fdf1dd;
}
.warn {
  margin: 2px 16px 0 0;
  color: #ab6100;
}
.alert-body {
  flex: 1;
}
.alert-body p {
  line-height: 20px;
  padding-top: 1px;
  margin-bottom: 15px;
}
.dismiss {
  width: 16px;
  height: 16px;
}
.row {
  display: flex;
  gap: 8px;
}
.btn {
  height: 32px;
  display: flex;
  align-items: center;
  justify-content: center;
  gap: 4px;
  padding: 0 11px;
  border: 1px solid #bfbfc3;
  border-radius: 4px;
  background: #fff;
  color: #333238;
  white-space: nowrap;
}
.btn.low {
  padding-top: 2px;
}
.btn.primary {
  background: #1f75cb;
  border-color: #1068bf;
  color: #fff;
}
.btn.square {
  width: 32px;
  padding: 0;
}
.btn.bell,
.btn.ref {
  padding-right: 7px;
}
.mono {
  font-family: "DejaVu Sans Mono", monospace;
}
.group {
  display: flex;
}
.group .btn:first-child {
  border-radius: 4px 0 0 4px;
}
.group .btn:last-child {
  border-left: 0;
  border-radius: 0 4px 4px 0;
}
.title-row {
  display: flex;
  align-items: center;
  padding: 16px 24px;
}
.avatar {
  width: 48px;
  height: 48px;
  margin-right: 8px;
  border: 1px solid #dcd6ea;
  border-radius: 4px;
  background: #f4f0ff;
  color: #41319c;
  font-size: 26px;
  line-height: 46px;
  text-align: center;
}
h1 {
  font-size: 28px;
  line-height: 36px;
  font-weight: 600;
  color: #28272d;
}
.globe {
  margin-left: 7px;
  color: #737278;
  stroke-width: 1.3;
}
.actions {
  margin-left: auto;
}
.more {
  width: 32px;
  height: 32px;
}
.columns {
  display: grid;
  grid-template-columns: minmax(0, 1fr) 289px;
  gap: 36px;
  padding: 0 21px 0 24px;
}
.tree-bar {
  display: flex;
  align-items: flex-start;
  height: 32px;
  margin-bottom: 18px;
}
.path {
  display: flex;
  gap: 8px;
  margin: 7px 11px 0 19px;
}
.path span {
  color: #737278;
}
.add {
  gap: 2px;
  margin-top: 2px;
  padding: 0 6px;
}
.tree-actions {
  margin-left: auto;
}
.drop {
  padding-right: 7px;
}
.commit {
  display: flex;
  align-items: center;
  height: 76px;
  padding: 0 16px;
  border: 1px solid #dcdcde;
  border-radius: 4px;
  background: #fbfafd;
}
.author {
  width: 32px;
  height: 32px;
  margin-right: 12px;
}
.commit-text {
  flex: 1;
  display: flex;
  flex-direction: column;
  gap: 1px;
  color: #737278;
}
.msg {
  font-weight: 600;
  color: #28272d;
}
.status {
  height: 24px;
  margin-right: 12px;
}
.commit .mono {
  background: #fbfafd;
}
.clip {
  padding: 0 7px;
}
.table-box {
  margin-top: 16px;
  border: 1px solid #dcdcde;
  border-radius: 4px;
  overflow: hidden;
}
table {
  width: 100%;
  table-layout: fixed;
  border-collapse: separate;
  border-spacing: 0;
}
th,
td {
  height: 42px;
  padding: 1px 16px 0;
  text-align: left;
  border-bottom: 1px solid #dcdcde;
  color: #626168;
  white-space: nowrap;
}
th {
  background: #fbfafd;
  font-weight: 600;
  color: #28272d;
}
th:last-child,
td:last-child {
  text-align: right;
}
.file {
  display: flex;
  align-items: center;
  gap: 4px;
  color: #333238;
}
.grey {
  color: #737278;
}
.brand {
  stroke: none;
}
.docker {
  color: #0288d1;
}
.sky {
  color: #42a5f5;
}
.info {
  color: #18171d;
}
.info h2 {
  font-size: 14px;
  line-height: 20px;
  font-weight: 600;
  color: #333238;
  margin: 5px 0 8px;
}
.langs {
  display: flex;
  gap: 2px;
  height: 8px;
  border-radius: 4px;
  overflow: hidden;
}
hr {
  height: 1px;
  border: 0;
  margin: 16px 0 13px;
  background: #ececef;
}
.info ul {
  list-style: none;
}
.info ul + hr {
  margin: 7px 0 13px;
}
.info li {
  height: 32px;
  display: flex;
  align-items: center;
}
.info li a {
  display: flex;
  align-items: center;
  gap: 8px;
}
.info li .icon {
  color: #737278;
}
.info b {
  font-weight: 600;
  color: #333238;
}
.info .blue,
.info .blue .icon {
  color: #1f75cb;
}
.info .chip {
  height: 32px;
  padding: 0 10px;
  border-radius: 4px;
  background: #fbfafd;
  color: #737278;
}
.info .spaced {
  margin-top: 4px;
}
</style>
